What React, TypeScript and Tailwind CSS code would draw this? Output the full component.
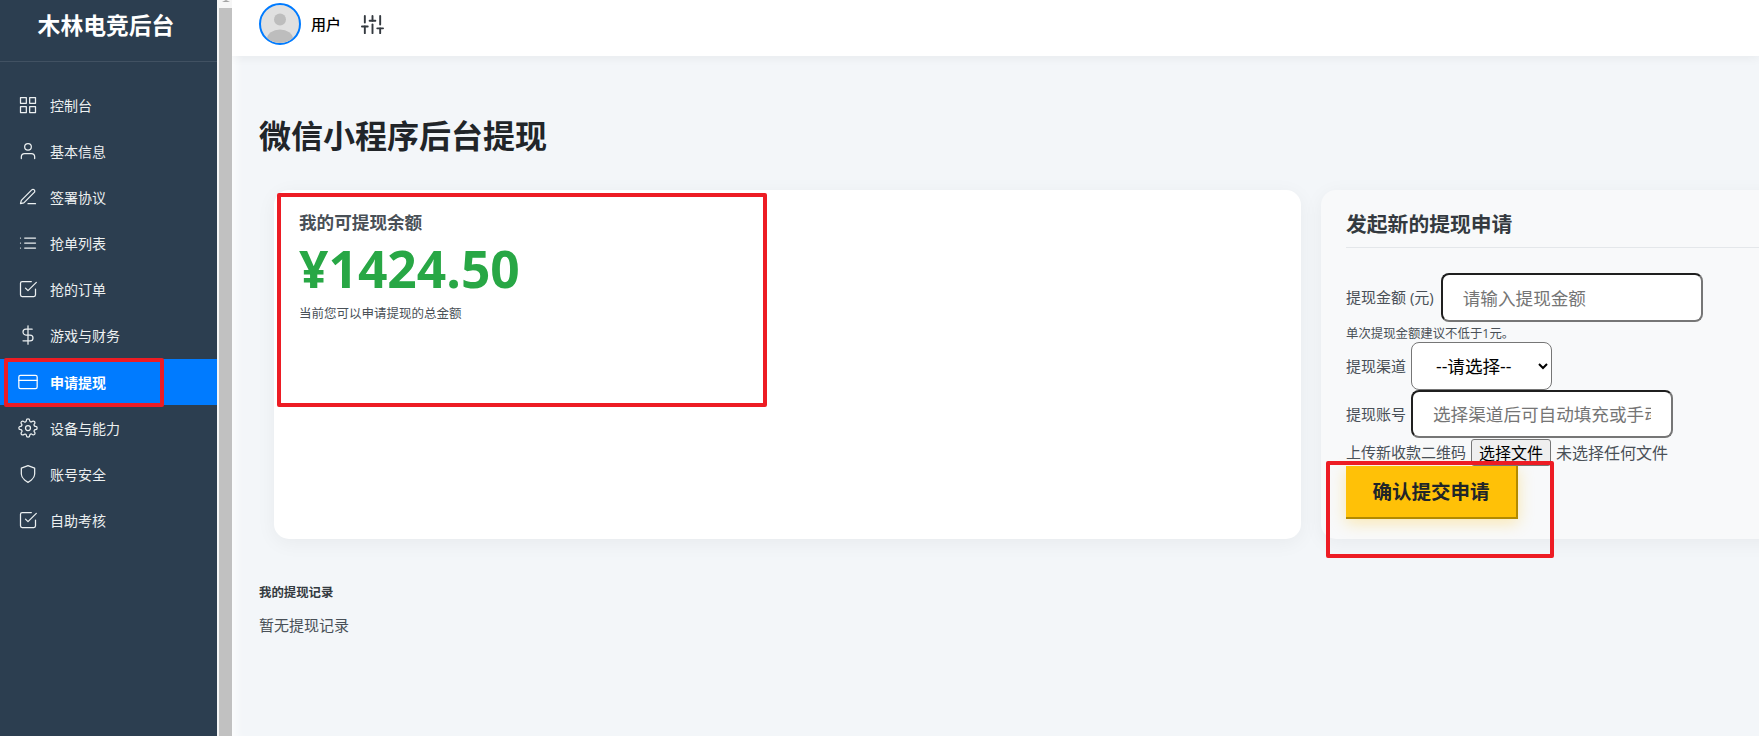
import {
  FiCheckSquare,
  FiCreditCard,
  FiDollarSign,
  FiEdit3,
  FiGrid,
  FiList,
  FiSettings,
  FiShield,
  FiSliders,
  FiUser,
} from "react-icons/fi";

const navItems = [
  { label: "控制台", icon: FiGrid },
  { label: "基本信息", icon: FiUser },
  { label: "签署协议", icon: FiEdit3 },
  { label: "抢单列表", icon: FiList },
  { label: "抢的订单", icon: FiCheckSquare },
  { label: "游戏与财务", icon: FiDollarSign },
  { label: "申请提现", icon: FiCreditCard, active: true },
  { label: "设备与能力", icon: FiSettings },
  { label: "账号安全", icon: FiShield },
  { label: "自助考核", icon: FiCheckSquare },
];

const fontStack = "font-['Open_Sans','Noto_Sans_CJK_SC',sans-serif]";

function Sidebar() {
  return (
    <aside className="w-[217px] shrink-0 bg-[#2c3e50] text-[#ecf0f1]">
      <div className="h-[62px] border-b border-[#415162] pt-[10px] pr-[5px] text-center text-[22.8px] leading-[32px] font-bold text-white">
        木林电竞后台
      </div>
      <nav className="pt-[20px]">
        {navItems.map((item) => {
          const Icon = item.icon;
          return (
            <div
              key={item.label}
              className={
                item.active
                  ? "mt-[1px] flex h-[46px] items-center gap-3 bg-[#007bff] pl-[18px] text-[14px] font-bold text-white"
                  : "flex h-[46px] items-center gap-3 pl-[18px] text-[14px]"
              }
            >
              <Icon size={20} strokeWidth={1.5} />
              <span>{item.label}</span>
            </div>
          );
        })}
      </nav>
    </aside>
  );
}

function Scrollbar() {
  return (
    <div className="flex w-[15px] shrink-0 flex-col bg-[#f6f6f6] pl-[2px]">
      <div className="flex h-[8px] w-[13px] justify-center">
        <div className="h-0 w-0 border-x-[4px] border-b-[2px] border-x-transparent border-b-[#a3a3a3]" />
      </div>
      <div className="w-[13px] flex-1 bg-[#c1c1c1]" />
    </div>
  );
}

function Avatar() {
  return (
    <div className="h-[42px] w-[42px] overflow-hidden rounded-full border-2 border-[#007bff] bg-[#e0e0e0]">
      <svg viewBox="0 0 38 38" className="h-full w-full">
        <circle cx="19" cy="14.5" r="6" fill="#bdbdbd" />
        <ellipse cx="19" cy="34" rx="13" ry="9.5" fill="#bdbdbd" />
      </svg>
    </div>
  );
}

function BalanceCard() {
  return (
    <div className="h-[349px] w-[1027px] shrink-0 rounded-[15px] bg-white px-[25px] pt-[19px] shadow-[0_4px_20px_rgba(0,0,0,0.05)]">
      <h3 className="text-[17.6px] leading-[26px] font-semibold text-[#495057]">我的可提现余额</h3>
      <p className="text-[51.5px] leading-[67px] font-bold text-[#28a745]">¥1424.50</p>
      <p className="mt-[3px] text-[12.5px] leading-[18px] text-[#495057]">当前您可以申请提现的总金额</p>
    </div>
  );
}

function WithdrawForm() {
  return (
    <div className="h-[349px] w-[600px] shrink-0 rounded-[15px] bg-[#f8f9fa] px-[25px] pt-[20px] text-[15px] text-[#495057] shadow-[0_4px_20px_rgba(0,0,0,0.05)]">
      <h3 className="h-[38px] border-b border-[#e4e7ea] text-[20.8px] leading-[28px] font-bold text-[#343a40]">
        发起新的提现申请
      </h3>
      <div className="mt-[25px] flex items-center gap-[7px]">
        <label>提现金额 (元)</label>
        <input
          placeholder="请输入提现金额"
          className="h-[49px] w-[262px] rounded-[8px] border-2 border-t-[#1f1f1f] border-r-[#767676] border-b-[#767676] border-l-[#1f1f1f] bg-white px-[20px] text-[17.6px] placeholder:text-[#757575]"
        />
      </div>
      <p className="h-[20px] pt-[3px] text-[12.4px] leading-[18px]">单次提现金额建议不低于1元。</p>
      <div className="flex items-center gap-[5px]">
        <label>提现渠道</label>
        <select className="h-[48px] w-[141px] rounded-[8px] border border-[#767676] bg-white px-[20px] text-[17.6px] text-black">
          <option>--请选择--</option>
        </select>
      </div>
      <div className="flex items-center gap-[5px]">
        <label>提现账号</label>
        <input
          placeholder="选择渠道后可自动填充或手动输入"
          className="h-[48px] w-[262px] rounded-[8px] border-2 border-t-[#1f1f1f] border-r-[#767676] border-b-[#767676] border-l-[#1f1f1f] bg-white px-[20px] text-[17.6px] placeholder:text-[#757575]"
        />
      </div>
      <div className="mt-[1px] flex h-[27px] items-center gap-[5px]">
        <label>上传新收款二维码</label>
        <span className="flex h-[27px] w-[80px] items-center justify-center rounded-[3px] border border-[#767676] bg-[#efefef] text-[16px] text-black">
          选择文件
        </span>
        <span className="text-[16px]">未选择任何文件</span>
      </div>
      <button className="block h-[53px] w-[172px] border-r-2 border-b-2 border-[#b38a00] bg-[#ffc107] text-[19.5px] font-bold text-[#212529] shadow-[0_4px_15px_rgba(255,193,7,0.3)]">
        确认提交申请
      </button>
    </div>
  );
}

export default function App() {
  return (
    <div className={`relative flex h-screen overflow-hidden bg-white ${fontStack}`}>
      <Sidebar />
      <Scrollbar />
      <main className="min-w-0 flex-1 overflow-hidden bg-[#f3f6f9] shadow-[inset_10px_0_10px_-6px_rgba(255,255,255,0.8)]">
        <header className="flex h-[56px] items-center bg-white pl-[27px] shadow-[0_2px_10px_rgba(0,0,0,0.05)]">
          <div className="-mt-[8px] flex items-center">
            <Avatar />
            <span className="ml-[10px] text-[15px] font-medium text-black">用户</span>
            <FiSliders size={23} strokeWidth={2} className="ml-[20px] text-[#343a40]" />
          </div>
        </header>
        <div className="pl-[27px]">
          <h1 className="pt-[55px] text-[32px] leading-[50px] font-bold text-[#212529]">微信小程序后台提现</h1>
          <div className="mt-[29px] ml-[15px] flex gap-[20px]">
            <BalanceCard />
            <WithdrawForm />
          </div>
          <h4 className="mt-[45px] text-[12.4px] leading-[18px] font-bold text-[#343a40]">我的提现记录</h4>
          <p className="mt-[12px] text-[15px] leading-[22px] text-[#495057]">暂无提现记录</p>
        </div>
      </main>
      {/* red annotation boxes drawn on the screenshot */}
      <div className="absolute top-[358px] left-[4px] h-[49px] w-[160px] rounded-[2px] border-4 border-[#ed1c24]" />
      <div className="absolute top-[193px] left-[277px] h-[214px] w-[490px] rounded-[2px] border-4 border-[#ed1c24]" />
      <div className="absolute top-[461px] left-[1326px] h-[97px] w-[228px] rounded-[2px] border-4 border-[#ed1c24]" />
    </div>
  );
}
